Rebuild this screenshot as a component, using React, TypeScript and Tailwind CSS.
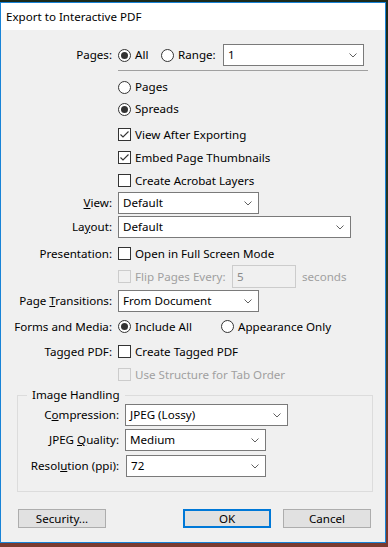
import type { ReactNode } from "react";

function Radio({ checked }: { checked?: boolean }) {
  return (
    <span className="flex h-[13px] w-[13px] shrink-0 items-center justify-center rounded-full border border-[#333333] bg-white">
      {checked && <span className="h-[7px] w-[7px] rounded-full bg-[#333333]" />}
    </span>
  );
}

function Check({ checked, disabled }: { checked?: boolean; disabled?: boolean }) {
  return (
    <span
      className={`flex h-[13px] w-[13px] shrink-0 items-center justify-center border ${
        disabled ? "border-[#cccccc] bg-[#f0f0f0]" : "border-[#333333] bg-white"
      }`}
    >
      {checked && (
        <svg width="11" height="11" viewBox="0 0 11 11">
          <polyline points="1.5,5.5 4,8 9.5,2.5" fill="none" stroke="#333333" strokeWidth="1.1" />
        </svg>
      )}
    </span>
  );
}

function Chevron() {
  return (
    <svg width="8" height="5" viewBox="0 0 8 5" className="shrink-0">
      <polyline points="0.5,0.5 4,4 7.5,0.5" fill="none" stroke="#606060" strokeWidth="1" />
    </svg>
  );
}

function Select({ value, className }: { value: string; className: string }) {
  return (
    <div
      className={`flex h-[22px] items-center justify-between border border-[#7a7a7a] bg-white pl-[4px] pr-[6px] ${className}`}
    >
      <span>{value}</span>
      <Chevron />
    </div>
  );
}

function Label({ children, w = "w-[111px]" }: { children?: ReactNode; w?: string }) {
  return <div className={`${w} shrink-0 text-right`}>{children}</div>;
}

function Btn({ children, primary }: { children: ReactNode; primary?: boolean }) {
  return (
    <div
      className={`flex h-[19px] w-[88px] items-center justify-center bg-[#e1e1e1] ${
        primary ? "border-2 border-[#0078d7]" : "border border-[#adadad]"
      }`}
    >
      {children}
    </div>
  );
}

export default function App() {
  return (
    <div className="h-[547px] w-[388px] overflow-hidden bg-gradient-to-b from-[#1c2a1c] via-[#2a3a28] to-[#7a3a30] pt-[2px] font-['Noto_Sans',sans-serif] text-[11.6px] leading-none text-black">
      <div className="flex h-[541px] w-[386px] flex-col border border-[#1883d7] bg-[#f0f0f0]">
        {/* Title bar */}
        <div className="flex h-[27px] shrink-0 items-center bg-white pl-[5px]">Export to Interactive PDF</div>

        {/* Body */}
        <div className="flex flex-col">
          <div className="mt-[14px] flex h-[22px] items-center">
            <Label>Pages:</Label>
            <div className="ml-[6px] flex w-[43px] items-center gap-[4px]">
              <Radio checked />
              <span>All</span>
            </div>
            <div className="flex w-[62px] items-center gap-[4px]">
              <Radio />
              <span>Range:</span>
            </div>
            <Select value="1" className="w-[141px]" />
          </div>

          <div className="ml-[117px] mt-[4px] h-px w-[250px] bg-[#a0a0a0]" />

          <div className="ml-[117px] mt-[5px] flex h-[22px] items-center gap-[4px]">
            <Radio />
            <span>Pages</span>
          </div>
          <div className="ml-[117px] flex h-[22px] items-center gap-[4px]">
            <Radio checked />
            <span>Spreads</span>
          </div>

          <div className="ml-[117px] mt-[3px] flex h-[23px] items-center gap-[4px]">
            <Check checked />
            <span>View After Exporting</span>
          </div>
          <div className="ml-[117px] flex h-[23px] items-center gap-[4px]">
            <Check checked />
            <span>Embed Page Thumbnails</span>
          </div>
          <div className="ml-[117px] flex h-[23px] items-center gap-[4px]">
            <Check />
            <span>Create Acrobat Layers</span>
          </div>

          <div className="flex h-[22px] items-center">
            <Label>
              <span className="underline">V</span>iew:
            </Label>
            <Select value="Default" className="ml-[6px] w-[141px]" />
          </div>
          <div className="mt-[2px] flex h-[22px] items-center">
            <Label>
              La<span className="underline">y</span>out:
            </Label>
            <Select value="Default" className="ml-[6px] w-[233px]" />
          </div>

          <div className="mt-[4px] flex h-[23px] items-center">
            <Label>Presentation:</Label>
            <div className="ml-[6px] flex items-center gap-[4px]">
              <Check />
              <span>Open in Full Screen Mode</span>
            </div>
          </div>
          <div className="flex h-[23px] items-center text-[#a0a0a0]">
            <Label />
            <div className="ml-[6px] flex w-[114px] items-center gap-[4px]">
              <Check disabled />
              <span>Flip Pages Every:</span>
            </div>
            <div className="flex h-[23px] w-[64px] items-center border border-[#cccccc] bg-[#f0f0f0] pl-[4px] text-[#8a8a8a]">
              5
            </div>
            <span className="ml-[6px]">seconds</span>
          </div>

          <div className="mt-[2px] flex h-[22px] items-center">
            <Label>
              Page <span className="underline">T</span>ransitions:
            </Label>
            <Select value="From Document" className="ml-[6px] w-[141px]" />
          </div>

          <div className="mt-[3px] flex h-[23px] items-center">
            <Label>Forms and Media:</Label>
            <div className="ml-[6px] flex w-[103px] items-center gap-[4px]">
              <Radio checked />
              <span>Include All</span>
            </div>
            <div className="flex items-center gap-[4px]">
              <Radio />
              <span>Appearance Only</span>
            </div>
          </div>

          <div className="mt-[2px] flex h-[23px] items-center">
            <Label>Tagged PDF:</Label>
            <div className="ml-[6px] flex items-center gap-[4px]">
              <Check />
              <span>Create Tagged PDF</span>
            </div>
          </div>
          <div className="ml-[117px] flex h-[23px] items-center gap-[4px] text-[#a0a0a0]">
            <Check disabled />
            <span>Use Structure for Tab Order</span>
          </div>

          {/* Image Handling group */}
          <div className="relative ml-[16px] mt-[9px] flex h-[97px] w-[356px] flex-col border border-[#dcdcdc]">
            <span className="absolute left-[9px] top-[-7px] bg-[#f0f0f0] px-[5px]">Image Handling</span>
            <div className="mt-[8px] flex h-[22px] items-center">
              <Label w="w-[101px]">
                C<span className="underline">o</span>mpression:
              </Label>
              <Select value="JPEG (Lossy)" className="ml-[6px] w-[163px]" />
            </div>
            <div className="mt-[3px] flex h-[22px] items-center">
              <Label w="w-[101px]">
                JPEG <span className="underline">Q</span>uality:
              </Label>
              <Select value="Medium" className="ml-[6px] w-[141px]" />
            </div>
            <div className="mt-[4px] flex h-[22px] items-center">
              <Label w="w-[101px]">
                Resol<span className="underline">u</span>tion (ppi):
              </Label>
              <Select value="72" className="ml-[7px] w-[140px]" />
            </div>
          </div>

          <div className="mt-[17px] flex items-center">
            <div className="ml-[17px]">
              <Btn>Security...</Btn>
            </div>
            <div className="ml-[77px]">
              <Btn primary>OK</Btn>
            </div>
            <div className="ml-[12px]">
              <Btn>Cancel</Btn>
            </div>
          </div>
        </div>
      </div>
    </div>
  );
}
